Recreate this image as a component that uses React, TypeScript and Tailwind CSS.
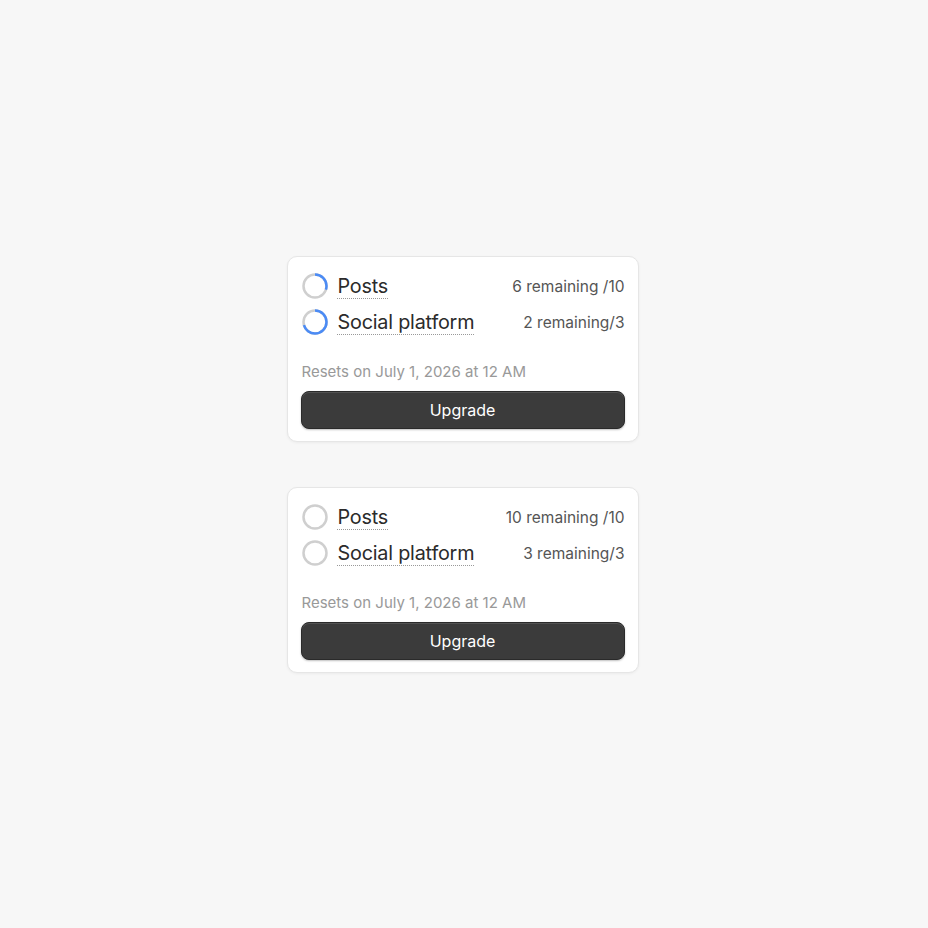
import React from 'react';

interface Quota {
  label: string;
  remaining: string;
  used: number;
}

interface UsageCardProps {
  quotas: Quota[];
  resetText: string;
}

const Ring: React.FC<{ used: number }> = ({ used }) => {
  const r = 11.5;
  const c = 2 * Math.PI * r;
  return (
    <svg width="26" height="26" viewBox="0 0 26 26" className="shrink-0 -rotate-90">
      <circle cx="13" cy="13" r={r} fill="none" stroke="#cfcfcf" strokeWidth="2.5" />
      {used > 0 && (
        <circle
          cx="13"
          cy="13"
          r={r}
          fill="none"
          stroke="#4b8bf5"
          strokeWidth="2.5"
          strokeDasharray={`${c * used} ${c}`}
        />
      )}
    </svg>
  );
};

const UsageCard: React.FC<UsageCardProps> = ({ quotas, resetText }) => (
  <div className="w-[352px] rounded-[10px] border border-[#e6e6e6] bg-white px-[13px] pt-[14px] pb-[12px] shadow-[0_1px_3px_rgba(0,0,0,0.05)]">
    <div className="flex flex-col gap-[6px]">
      {quotas.map((q) => (
        <div key={q.label} className="flex h-[30px] items-center justify-between pl-px">
          <div className="flex items-center gap-[10px]">
            <Ring used={q.used} />
            <span className="pt-[2px] text-[19.8px] leading-none tracking-[-0.2px] text-[#2b2b2b] underline decoration-dotted decoration-[#999] decoration-1 underline-offset-[5px]">
              {q.label}
            </span>
          </div>
          <span className="pt-px text-[15.5px] text-[#555]">{q.remaining}</span>
        </div>
      ))}
    </div>
    <p className="mt-[25px] pl-px text-[15px] leading-5 text-[#999]">{resetText}</p>
    <button className="mt-[9px] flex h-[38px] w-full items-center justify-center rounded-[8px] border border-[#2a2a2a] bg-[#3b3b3b] text-[16px] text-white shadow-[0_1px_2px_rgba(0,0,0,0.25),inset_0_1px_0_rgba(255,255,255,0.12)]">
      Upgrade
    </button>
  </div>
);

export default function App() {
  const reset = 'Resets on July 1, 2026 at 12 AM';
  return (
    <div
      className="flex min-h-[928px] flex-col items-center gap-[45px] bg-[#f7f7f7] pt-[256px] pr-[3px]"
      style={{ fontFamily: 'Inter, "Noto Sans", sans-serif' }}
    >
      <UsageCard
        resetText={reset}
        quotas={[
          { label: 'Posts', remaining: '6 remaining /10', used: 0.3 },
          { label: 'Social platform', remaining: '2 remaining/3', used: 0.7 },
        ]}
      />
      <UsageCard
        resetText={reset}
        quotas={[
          { label: 'Posts', remaining: '10 remaining /10', used: 0 },
          { label: 'Social platform', remaining: '3 remaining/3', used: 0 },
        ]}
      />
    </div>
  );
}
